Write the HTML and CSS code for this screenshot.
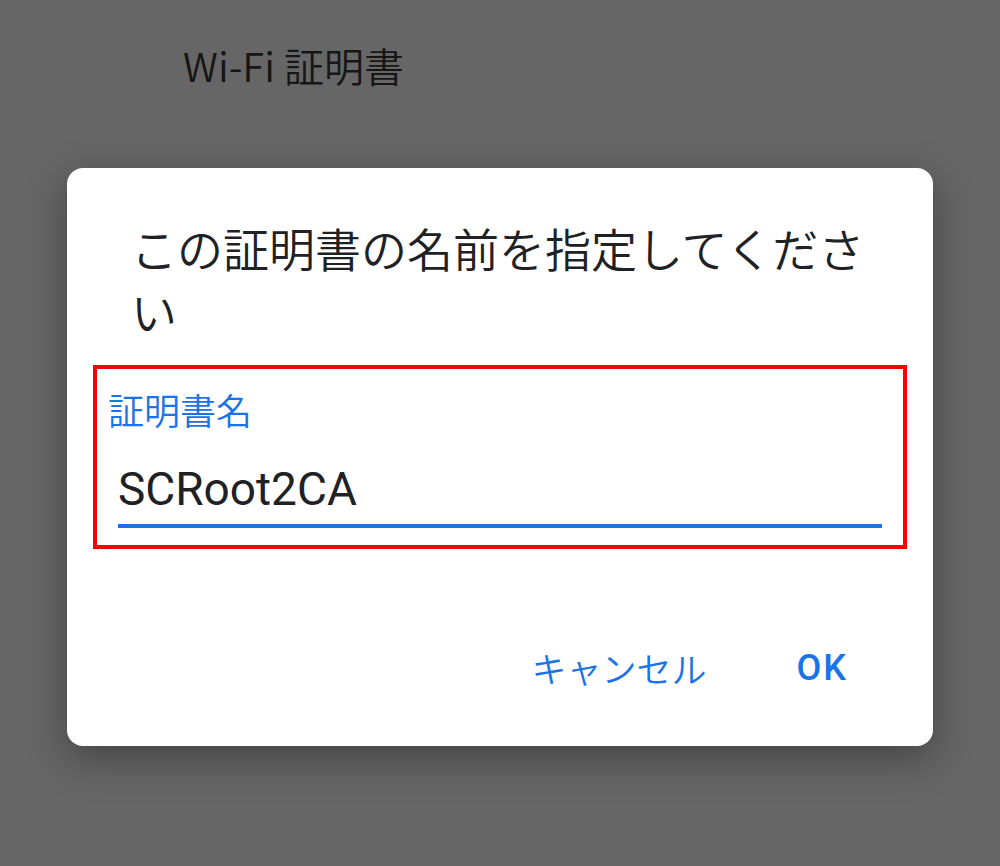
FILE: index.html
```html
<!DOCTYPE html>
<html lang="ja">
<head>
  <meta charset="UTF-8">
  <meta name="viewport" content="width=device-width, initial-scale=1.0">
  <title>Wi-Fi 証明書</title>
  <link rel="stylesheet" href="styles.css">
</head>
<body>
  <div class="screen">
    <div class="app-title">Wi-Fi 証明書</div>

    <div class="dialog">
      <div class="dialog-title">この証明書の名前を指定してください</div>

      <div class="field highlight">
        <div class="field-label">証明書名</div>
        <div class="field-input">SCRoot2CA</div>
      </div>

      <div class="dialog-actions">
        <button class="action">キャンセル</button>
        <button class="action action-ok">OK</button>
      </div>
    </div>
  </div>
</body>
</html>
```

FILE: styles.css
```css
body {
  margin: 0;
  background-color: #666666;
  font-family: 'Noto Sans CJK JP', 'Noto Sans', sans-serif;
}

.screen {
  height: 866px;
  padding-top: 37px;
  box-sizing: border-box;
  overflow: hidden;
}

.app-title {
  margin-left: 183px;
  font-size: 40px;
  font-weight: 350;
  line-height: 56px;
  color: #161616;
}

.dialog {
  margin: 75px 67px 0;
  padding: 48px 26px 54px;
  background-color: #fff;
  border-radius: 16px;
  box-shadow: 0 12px 40px rgba(0, 0, 0, 0.35);
}

.dialog-title {
  padding: 0 30px 0 38px;
  font-size: 46px;
  font-weight: 350;
  line-height: 63px;
  color: #202124;
}

/* red box marking the input */
.field {
  margin-top: 23px;
  padding: 16px 21px 17px 11px;
}

.highlight {
  border: 4px solid #ff0000;
}

.field-label {
  font-size: 36px;
  font-weight: 350;
  line-height: 48px;
  color: #1a73e8;
}

.field-input {
  margin: 28px 0 0 10px;
  padding-bottom: 7px;
  border-bottom: 4px solid #1a73e8;
  font-family: 'Roboto', sans-serif;
  font-size: 46px;
  line-height: 56px;
  color: #202124;
}

.dialog-actions {
  display: flex;
  justify-content: flex-end;
  gap: 90px;
  margin-top: 95px;
  padding-right: 59px;
}

.action {
  background: none;
  border: none;
  padding: 0;
  font-family: 'Noto Sans CJK JP', sans-serif;
  font-size: 35px;
  font-weight: 350;
  line-height: 48px;
  color: #1a73e8;
  cursor: pointer;
}

.action-ok {
  font-family: 'Roboto', sans-serif;
  font-weight: 500;
  font-size: 36px;
  letter-spacing: 2px;
}
```
